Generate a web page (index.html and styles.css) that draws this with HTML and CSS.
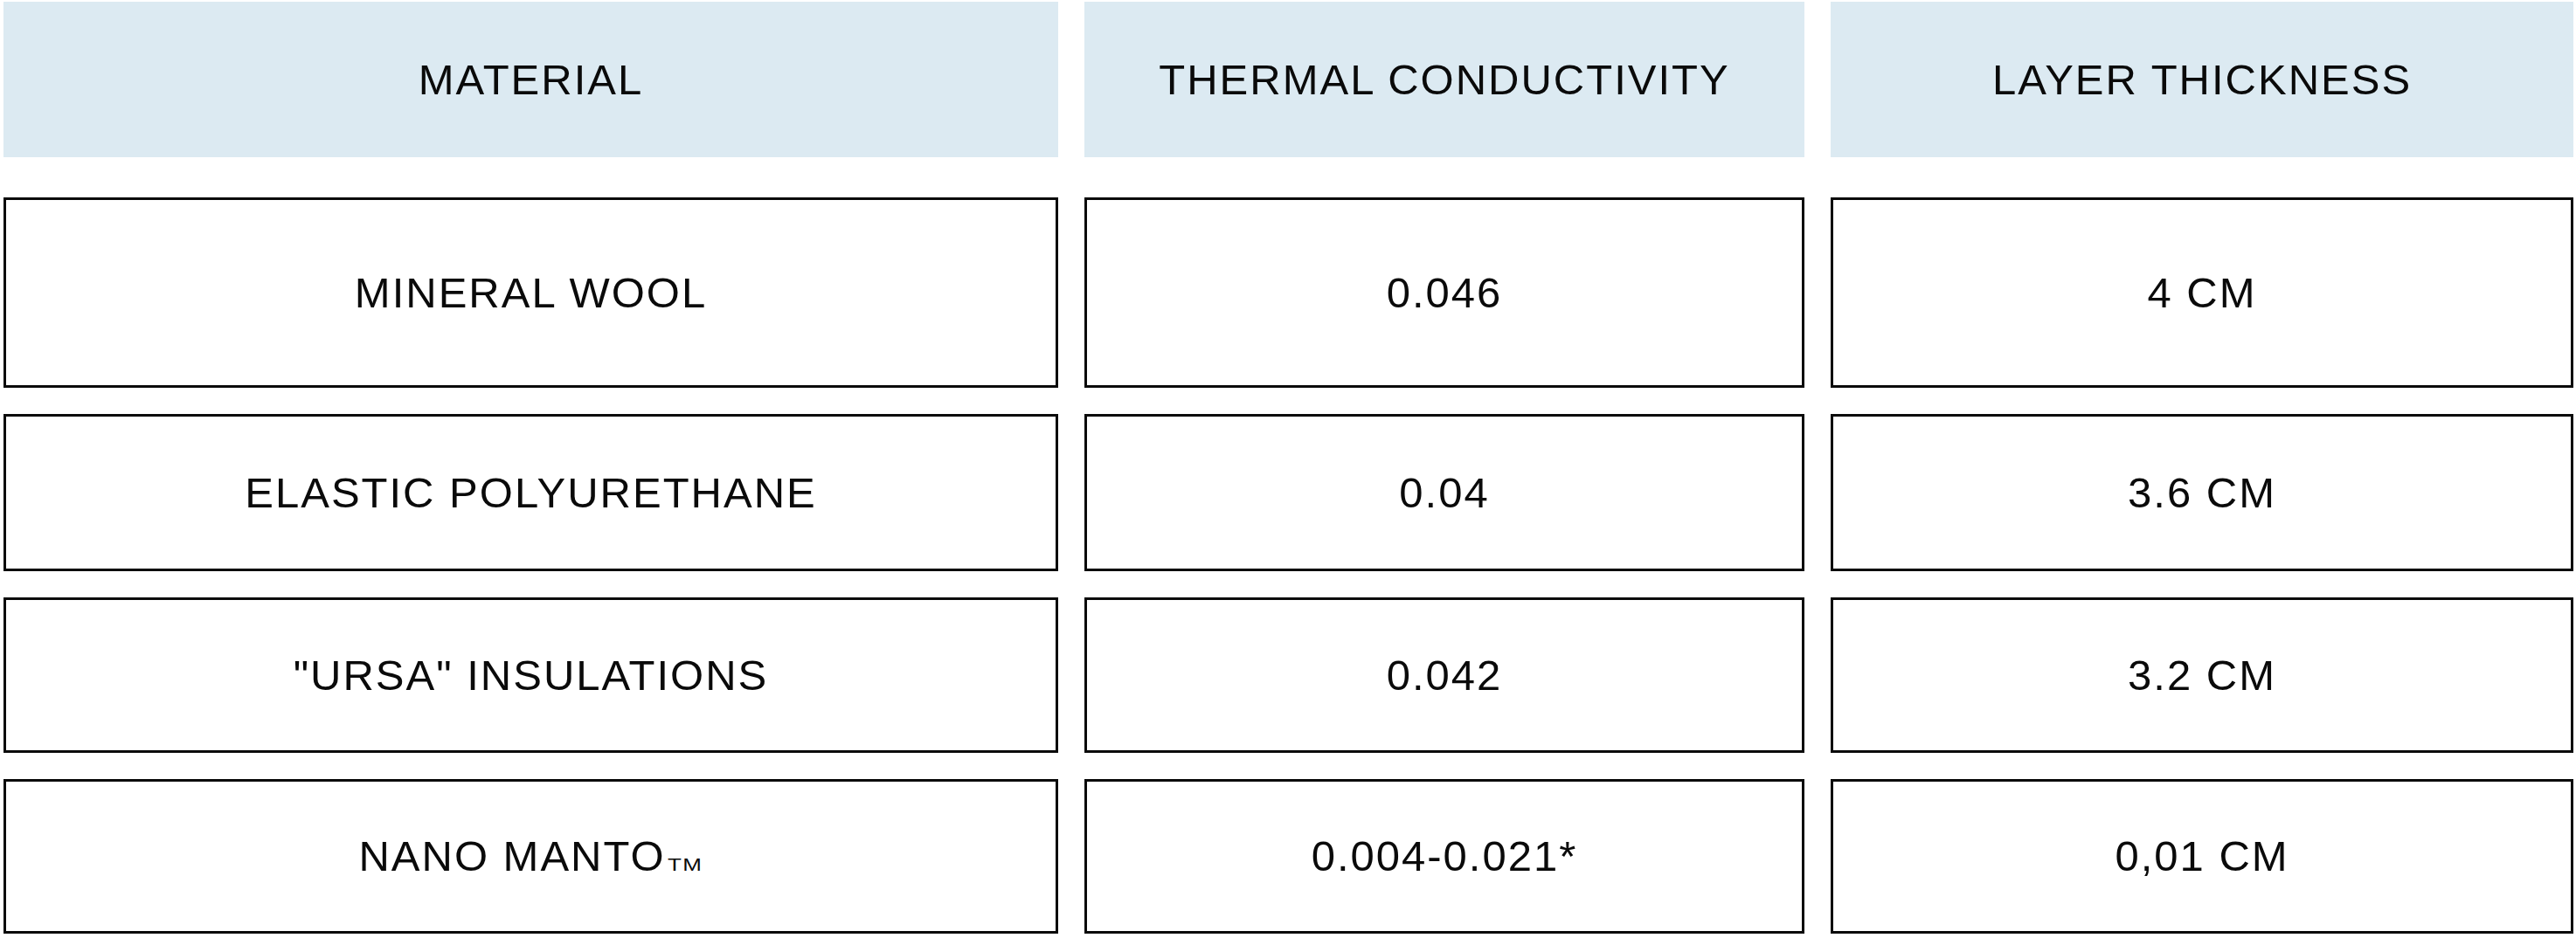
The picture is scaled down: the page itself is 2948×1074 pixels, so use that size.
FILE: index.html
```html
<!DOCTYPE html>
<html lang="en">
<head>
<meta charset="utf-8">
<title>Material comparison</title>
<link rel="stylesheet" href="styles.css">
</head>
<body>
<div class="table">
  <div class="cell head">MATERIAL</div>
  <div class="cell head">THERMAL CONDUCTIVITY</div>
  <div class="cell head">LAYER THICKNESS</div>

  <div class="cell row r1">MINERAL WOOL</div>
  <div class="cell row r1">0.046</div>
  <div class="cell row r1">4 CM</div>

  <div class="cell row r2">ELASTIC POLYURETHANE</div>
  <div class="cell row r2">0.04</div>
  <div class="cell row r2">3.6 CM</div>

  <div class="cell row r3">"URSA" INSULATIONS</div>
  <div class="cell row r3">0.042</div>
  <div class="cell row r3">3.2 CM</div>

  <div class="cell row r4">NANO MANTO<span class="tm">TM</span></div>
  <div class="cell row r4">0.004-0.021*</div>
  <div class="cell row r4">0,01 CM</div>
</div>
</body>
</html>
```

FILE: styles.css
```css
html, body {
  background: #ffffff;
}

body {
  margin: 2px 3px 0 4px;
  font-family: "Liberation Sans", Arial, sans-serif;
  color: #0a0a0a;
}

.table {
  display: grid;
  grid-template-columns: 1207px 824px 850px;
  column-gap: 30px;
  row-gap: 30px;
  align-items: start;
}

.cell {
  box-sizing: border-box;
  display: flex;
  align-items: center;
  justify-content: center;
  font-size: 49px;
  letter-spacing: 2px;
  line-height: 1;
  white-space: nowrap;
}

.head {
  height: 178px;
  background: #dceaf2;
  margin-bottom: 16px;
}

.row {
  border: 3px solid #0a0a0a;
  background: #ffffff;
}

.r1 { height: 218px; }
.r2 { height: 180px; }
.r3 { height: 178px; }
.r4 { height: 177px; }

.tm {
  display: inline-block;
  font-size: 20px;
  letter-spacing: 1px;
  margin-top: 19px;
  margin-left: 2px;
  margin-right: 10px;
  transform: scaleX(1.3);
  transform-origin: left center;
}
```
